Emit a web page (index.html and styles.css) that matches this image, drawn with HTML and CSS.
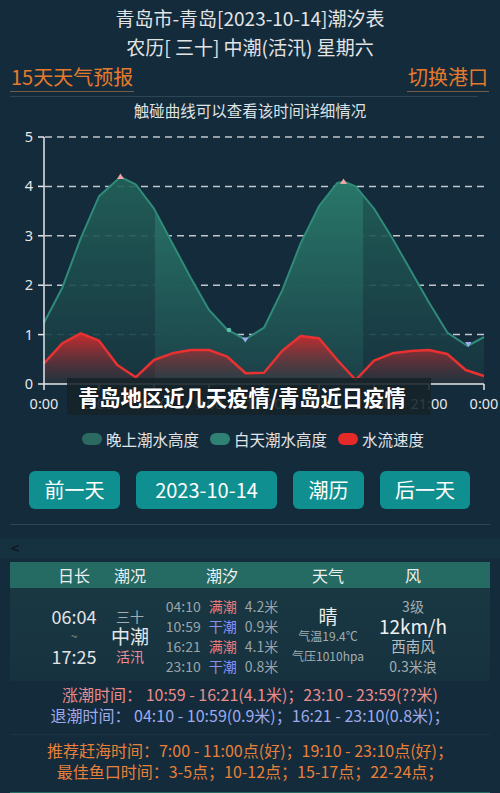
FILE: index.html
```html
<!DOCTYPE html>
<html>
<head>
  <meta charset="utf-8">
  <title>青岛潮汐表</title>
  <link rel="stylesheet" href="styles.css">
</head>
<body>
  <div class="header">
    <div class="title">青岛市-青岛[2023-10-14]潮汐表</div>
    <div class="title">农历[ 三十] 中潮(活汛) 星期六</div>
  </div>

  <div class="nav-row">
    <span class="nav-link">15天天气预报</span>
    <span class="nav-link">切换港口</span>
  </div>
  <div class="sep sep-top"></div>

  <div class="chart-note">触碰曲线可以查看该时间详细情况</div>

  <div class="chart">
    <svg width="500" height="300" viewBox="0 0 500 300">
      <defs>
        <linearGradient id="nightFill" x1="0" y1="0" x2="0" y2="1">
          <stop offset="0" stop-color="#22625a"/>
          <stop offset="1" stop-color="#17343f"/>
        </linearGradient>
        <linearGradient id="dayFill" x1="0" y1="0" x2="0" y2="1">
          <stop offset="0" stop-color="#2a7b6c"/>
          <stop offset="1" stop-color="#1b4249"/>
        </linearGradient>
        <linearGradient id="redFill" x1="0" y1="0" x2="0" y2="1">
          <stop offset="0" stop-color="#d42a2c" stop-opacity="0.95"/>
          <stop offset="1" stop-color="#7a2a34" stop-opacity="0.1"/>
        </linearGradient>
        <clipPath id="dayClip">
          <rect x="155" y="0" width="208" height="500"/>
        </clipPath>
      </defs>
      <g transform="translate(0,-121)">
        <!-- grid -->
        <g class="grid">
          <line x1="45" y1="137" x2="484" y2="137"/>
          <line x1="45" y1="186.4" x2="484" y2="186.4"/>
          <line x1="45" y1="235.8" x2="484" y2="235.8"/>
          <line x1="45" y1="285.2" x2="484" y2="285.2"/>
          <line x1="45" y1="334.6" x2="484" y2="334.6"/>
        </g>

        <!-- tide area, night then day -->
        <path class="tide-area" fill="url(#nightFill)" d="M44,384 L44,322.7 62.3,287.7 80.7,238.3 99,196.3 120.4,177 135.7,184.4 154,208.6 172.3,243.2 190.7,277.8 209,309.9 227.3,329.7 245.3,339.5 264,327.7 282.3,290.1 300.7,243.2 319,206.2 337.3,182.9 343.7,181.5 355.7,186.4 374,208.6 392.3,238.3 410.7,270.4 429,302.5 447.3,332.6 467.5,346 484,337 L484,384 Z"/>
        <path class="tide-area" fill="url(#dayFill)" clip-path="url(#dayClip)" d="M44,384 L44,322.7 62.3,287.7 80.7,238.3 99,196.3 120.4,177 135.7,184.4 154,208.6 172.3,243.2 190.7,277.8 209,309.9 227.3,329.7 245.3,339.5 264,327.7 282.3,290.1 300.7,243.2 319,206.2 337.3,182.9 343.7,181.5 355.7,186.4 374,208.6 392.3,238.3 410.7,270.4 429,302.5 447.3,332.6 467.5,346 484,337 L484,384 Z"/>
        <polyline class="tide-line" points="44,322.7 62.3,287.7 80.7,238.3 99,196.3 120.4,177 135.7,184.4 154,208.6 172.3,243.2 190.7,277.8 209,309.9 227.3,329.7 245.3,339.5 264,327.7 282.3,290.1 300.7,243.2 319,206.2 337.3,182.9 343.7,181.5 355.7,186.4 374,208.6 392.3,238.3 410.7,270.4 429,302.5 447.3,332.6 467.5,346 484,337"/>

        <!-- current speed -->
        <path fill="url(#redFill)" d="M44,384 L44,363.3 62.3,343.3 80.7,333.3 99,340.7 117.3,365 135.7,377.3 154,360 172.3,353.3 190.7,350 209,350 227.3,356.7 245.7,373.3 264,372.7 282.3,350.7 300.7,336 319,338.3 337.3,360 355.7,380 374,360.7 392.3,353.3 410.7,351 429,350 447.3,354 465.7,370 484,376 L484,384 Z"/>
        <polyline class="speed-line" points="44,363.3 62.3,343.3 80.7,333.3 99,340.7 117.3,365 135.7,377.3 154,360 172.3,353.3 190.7,350 209,350 227.3,356.7 245.7,373.3 264,372.7 282.3,350.7 300.7,336 319,338.3 337.3,360 355.7,380 374,360.7 392.3,353.3 410.7,351 429,350 447.3,354 465.7,370 484,376"/>

        <!-- high / low markers -->
        <polygon class="mark-high" points="117,179 120.4,173.5 124,179"/>
        <polygon class="mark-high" points="340,184 343.5,178.5 347,184"/>
        <polygon class="mark-low" points="242,337.5 248.5,337.5 245.3,342.5"/>
        <polygon class="mark-low" points="465,342 471.5,342 468.3,347"/>
        <circle cx="229" cy="330" r="2.3" fill="#5fbfa6"/>

        <!-- axes -->
        <g class="axis">
          <line x1="44" y1="137" x2="44" y2="384"/>
          <line x1="44" y1="384" x2="484" y2="384"/>
          <line x1="38" y1="137" x2="44" y2="137"/>
          <line x1="38" y1="186.4" x2="44" y2="186.4"/>
          <line x1="38" y1="235.8" x2="44" y2="235.8"/>
          <line x1="38" y1="285.2" x2="44" y2="285.2"/>
          <line x1="38" y1="334.6" x2="44" y2="334.6"/>
          <line x1="38" y1="384" x2="44" y2="384"/>
          <line x1="44" y1="384" x2="44" y2="390"/>
          <line x1="99" y1="384" x2="99" y2="390"/>
          <line x1="154" y1="384" x2="154" y2="390"/>
          <line x1="209" y1="384" x2="209" y2="390"/>
          <line x1="264" y1="384" x2="264" y2="390"/>
          <line x1="319" y1="384" x2="319" y2="390"/>
          <line x1="374" y1="384" x2="374" y2="390"/>
          <line x1="429" y1="384" x2="429" y2="390"/>
          <line x1="484" y1="384" x2="484" y2="390"/>
        </g>
        <g class="y-labels">
          <text x="33" y="142">5</text>
          <text x="33" y="191.4">4</text>
          <text x="33" y="240.8">3</text>
          <text x="33" y="290.2">2</text>
          <text x="33" y="339.6">1</text>
          <text x="33" y="389">0</text>
        </g>
        <g class="x-labels">
          <text x="44" y="409">0:00</text>
          <text x="99" y="409">3:00</text>
          <text x="154" y="409">6:00</text>
          <text x="209" y="409">9:00</text>
          <text x="264" y="409">12:00</text>
          <text x="319" y="409">15:00</text>
          <text x="374" y="409">18:00</text>
          <text x="429" y="409">21:00</text>
          <text x="484" y="409">0:00</text>
        </g>
      </g>
    </svg>
    <div class="banner">青岛地区近几天疫情/青岛近日疫情</div>
  </div>

  <div class="legend">
    <span class="legend-item"><i class="dot dot-night"></i>晚上潮水高度</span>
    <span class="legend-item"><i class="dot dot-day"></i>白天潮水高度</span>
    <span class="legend-item"><i class="dot dot-speed"></i>水流速度</span>
  </div>

  <div class="buttons">
    <span class="btn btn-prev">前一天</span>
    <span class="btn btn-date">2023-10-14</span>
    <span class="btn btn-cal">潮历</span>
    <span class="btn btn-next">后一天</span>
  </div>
  <div class="sep sep-mid"></div>

  <div class="back">&lt;</div>

  <div class="table">
    <div class="table-head">
      <span>日长</span>
      <span>潮况</span>
      <span>潮汐</span>
      <span>天气</span>
      <span>风</span>
    </div>
    <div class="table-body">
      <div class="col col-day">
        <div class="big">06:04</div>
        <div class="tilde">~</div>
        <div class="big">17:25</div>
      </div>
      <div class="col col-state">
        <div class="muted">三十</div>
        <div class="big">中潮</div>
        <div class="pink">活汛</div>
      </div>
      <div class="col col-tide">
        <div class="tide-row"><span class="t">04:10</span><span class="high">满潮</span><span class="v">4.2米</span></div>
        <div class="tide-row"><span class="t">10:59</span><span class="low">干潮</span><span class="v">0.9米</span></div>
        <div class="tide-row"><span class="t">16:21</span><span class="high">满潮</span><span class="v">4.1米</span></div>
        <div class="tide-row"><span class="t">23:10</span><span class="low">干潮</span><span class="v">0.8米</span></div>
      </div>
      <div class="col col-weather">
        <div class="big">晴</div>
        <div class="small">气温19.4℃</div>
        <div class="small">气压1010hpa</div>
      </div>
      <div class="col col-wind">
        <div class="muted">3级</div>
        <div class="big">12km/h</div>
        <div class="mid">西南风</div>
        <div class="muted">0.3米浪</div>
      </div>
    </div>
  </div>

  <div class="info">
    <div class="rise">涨潮时间：&nbsp;10:59 - 16:21(4.1米)；23:10 - 23:59(??米)</div>
    <div class="fall">退潮时间：&nbsp;04:10 - 10:59(0.9米)；16:21 - 23:10(0.8米)；</div>
  </div>
  <div class="sep sep-info"></div>
  <div class="info">
    <div class="tip">推荐赶海时间：7:00 - 11:00点(好)；19:10 - 23:10点(好)；</div>
    <div class="tip">最佳鱼口时间：3-5点；10-12点；15-17点；22-24点；</div>
  </div>

  <div class="next-head"></div>
</body>
</html>
```

FILE: styles.css
```css
body {
  margin: 0;
  padding: 0;
  background-color: #132b3b;
  font-family: "Noto Sans CJK SC", "Noto Sans", sans-serif;
  color: #e4e6e8;
  overflow: hidden;
}

.header {
  padding-top: 3px;
  text-align: center;
}

.title {
  font-size: 19px;
  line-height: 29px;
  color: #e2e4e6;
}

.nav-row {
  display: flex;
  justify-content: space-between;
  margin-top: 2px;
  padding: 0 11px 0 10px;
}

.nav-link {
  font-size: 20px;
  line-height: 28px;
  color: #e67a2c;
  border-bottom: 1px solid #7a5c44;
  padding: 0 1px;
}

.sep {
  height: 1px;
  background-color: #2c4656;
}

.sep-top {
  margin: 4px 22px 0 10px;
}

.chart-note {
  text-align: center;
  font-size: 15.5px;
  line-height: 22px;
  margin-top: 2px;
  color: #dfe2e4;
}

.chart {
  position: relative;
  height: 300px;
}

.chart svg {
  display: block;
}

.grid line {
  stroke: #c4c8cc;
  stroke-width: 1.5;
  stroke-dasharray: 7 5;
}

.tide-area {
  fill-opacity: 0.9;
}

.tide-line {
  fill: none;
  stroke: #2f8b79;
  stroke-width: 2;
  stroke-linejoin: round;
}

.speed-line {
  fill: none;
  stroke: #e83232;
  stroke-width: 2.5;
  stroke-linejoin: round;
}

.mark-high {
  fill: #f3a3a3;
}

.mark-low {
  fill: #a6aaf0;
}

.axis line {
  stroke: #e6e8ea;
  stroke-width: 1.5;
}

.y-labels text,
.x-labels text {
  font-family: "Noto Sans", sans-serif;
  font-size: 14.5px;
  fill: #e6e8ea;
}

.y-labels text {
  text-anchor: end;
}

.x-labels text {
  text-anchor: middle;
}

.banner {
  position: absolute;
  left: 67px;
  top: 257px;
  width: 353px;
  height: 37px;
  padding-left: 11px;
  background-color: rgba(22, 34, 40, 0.88);
  color: #ffffff;
  font-size: 21.3px;
  font-weight: bold;
  line-height: 37px;
  text-shadow: 0 0 2px rgba(0, 0, 0, 0.6);
}

.legend {
  display: flex;
  justify-content: center;
  gap: 11px;
  margin-top: 7px;
  padding-left: 6px;
  font-size: 15.5px;
  line-height: 22px;
  color: #e2e4e6;
}

.legend-item {
  display: flex;
  align-items: center;
}

.dot {
  display: inline-block;
  width: 20px;
  height: 12px;
  border-radius: 6px;
  margin-right: 4px;
}

.dot-night {
  background-color: #2a6a60;
}

.dot-day {
  background-color: #2f8273;
}

.dot-speed {
  background-color: #e62a2a;
}

.buttons {
  display: flex;
  gap: 16px;
  margin-top: 21px;
  padding-left: 29px;
}

.btn {
  display: inline-block;
  height: 38px;
  line-height: 38px;
  text-align: center;
  font-size: 20px;
  color: #ffffff;
  background-color: #0f8f8f;
  border-radius: 6px;
}

.btn-prev { width: 91px; }
.btn-date { width: 141px; }
.btn-cal { width: 71px; }
.btn-next { width: 90px; }

.sep-mid {
  margin: 15px 10px 0 10px;
}

.back {
  font-size: 15px;
  line-height: 20px;
  margin-top: 13px;
  padding-left: 11px;
  color: #0b1218;
  background: linear-gradient(#15303e, #163240);
}

.table {
  margin: 4px 10px 0 10px;
}

.table-head,
.table-body {
  display: grid;
  grid-template-columns: 68px 44px 140px 72px 98px;
  padding-left: 30px;
}

.table-head {
  height: 26px;
  line-height: 26px;
  background-color: #256a63;
  font-size: 16px;
  color: #eef0f0;
  text-align: center;
}

.table-body {
  padding-top: 8px;
  padding-bottom: 5px;
  background: linear-gradient(#193842, #16323f);
}

.col {
  display: flex;
  flex-direction: column;
  justify-content: center;
  align-items: center;
  line-height: 20px;
  font-size: 14px;
}

.col-day .big {
  font-size: 18px;
  color: #e2e4e6;
}

.tilde {
  font-size: 12px;
  color: #8a9aa2;
}

.col-state .big {
  font-size: 19px;
  color: #e6e8ea;
}

.muted {
  color: #a4adb2;
}

.pink {
  color: #f08c92;
}

.tide-row {
  display: flex;
  gap: 8px;
}

.tide-row .t,
.tide-row .v {
  color: #9aa4aa;
}

.tide-row .high {
  color: #f0787a;
}

.tide-row .low {
  color: #8e8ef2;
}

.col-weather .big {
  font-size: 19px;
  color: #eceeee;
}

.small {
  font-size: 12px;
  color: #a4adb2;
}

.col-wind .big {
  font-size: 19px;
  color: #eef0f0;
}

.mid {
  font-size: 14.5px;
  color: #b6bec2;
}

.info {
  text-align: center;
  font-size: 16px;
  line-height: 21px;
}

.rise {
  margin-top: 3px;
  color: #e98c8c;
}

.fall {
  color: #9fa9ec;
}

.sep-info {
  margin: 8px 10px 5px 10px;
  background-color: #1c3544;
}

.tip {
  color: #e8803a;
}

.next-head {
  margin: 10px 10px 0 10px;
  height: 20px;
  background-color: #256a63;
}
```
